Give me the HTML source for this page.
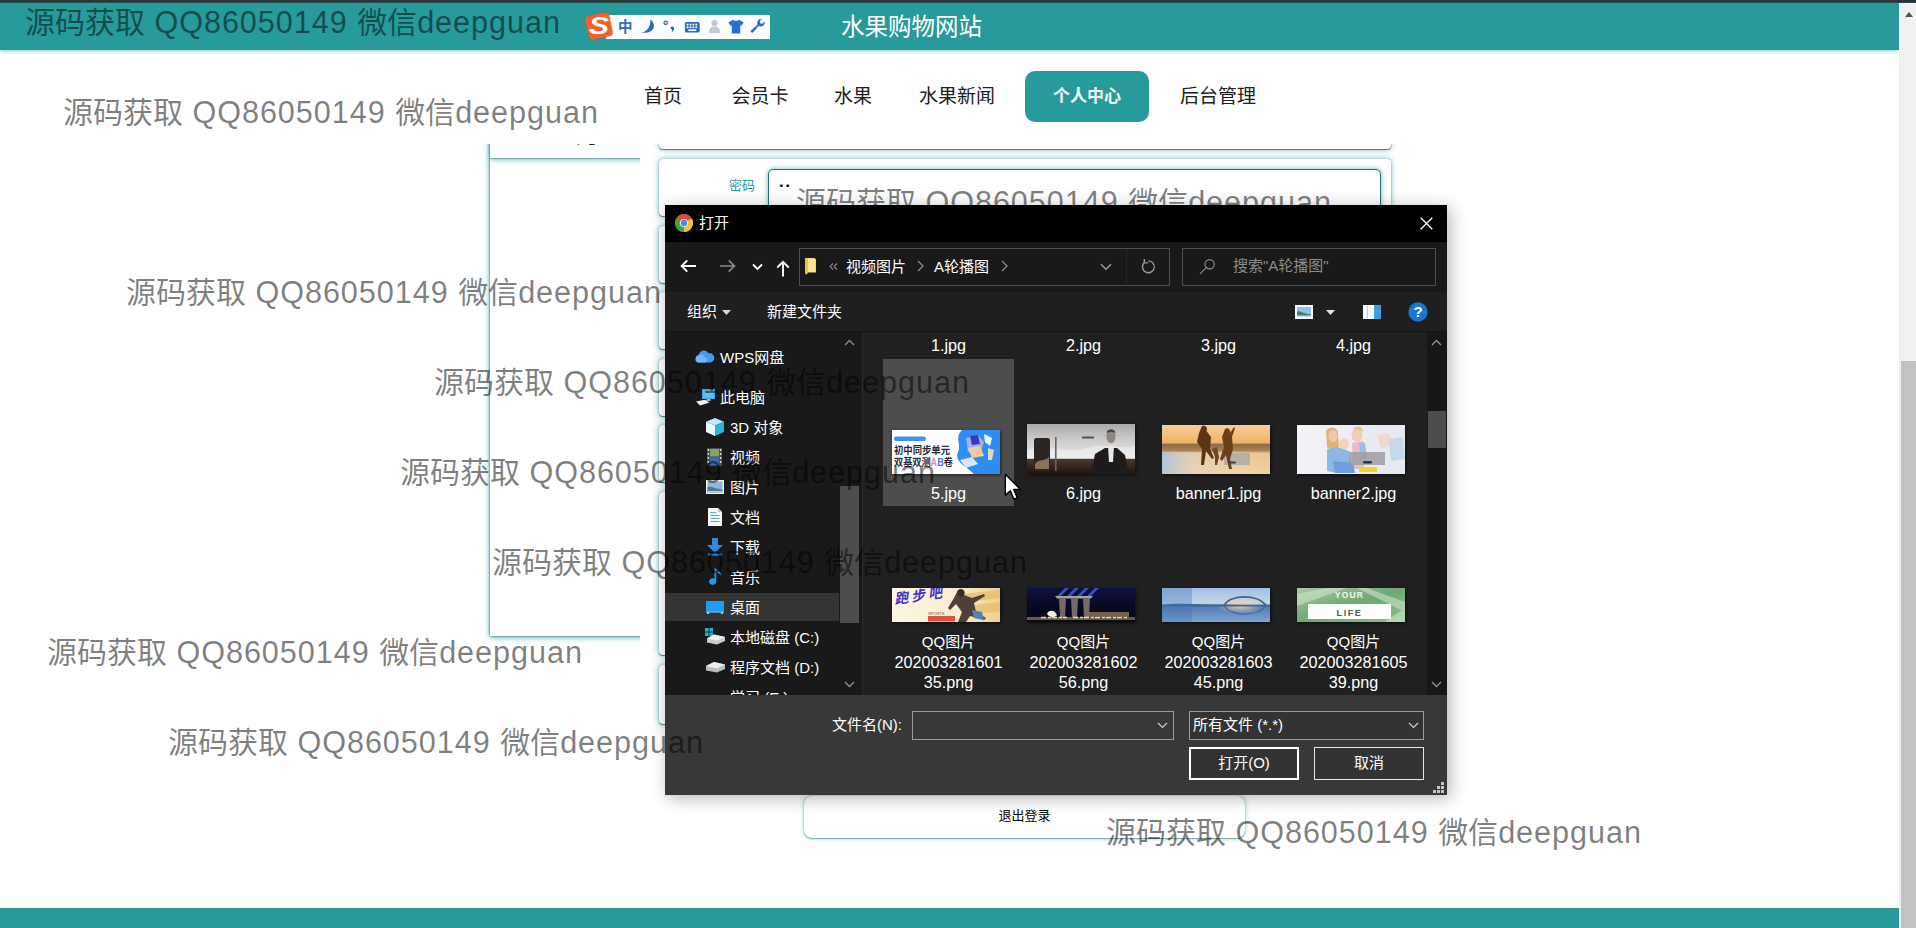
<!DOCTYPE html>
<html lang="zh-CN">
<head>
<meta charset="utf-8">
<title>水果购物网站</title>
<style>
*{box-sizing:border-box;margin:0;padding:0}
html,body{width:1916px;height:928px;overflow:hidden;background:#fff}
body{position:relative;font-family:"Liberation Sans","Noto Sans CJK SC",sans-serif;color:#000}
.abs{position:absolute}
/* page chrome */
#topstripe{left:0;top:0;width:1916px;height:3px;background:linear-gradient(#2c3234 0,#2c3234 66%,#1f5a5c 100%)}
#header{left:0;top:3px;width:1899px;height:47px;background:#279a9b;box-shadow:0 1px 4px rgba(39,154,155,.55)}
#sitetitle{left:841px;top:11px;width:150px;height:32px;line-height:32px;font-size:23.5px;color:#fff;white-space:nowrap}
#footer{left:0;top:908px;width:1899px;height:20px;background:#279a9b}
#sbar{left:1899px;top:3px;width:17px;height:925px;background:#f1f1f1}
#sbar .thumb{position:absolute;left:2px;top:358px;width:15px;height:567px;background:#c1c1c1}
#sbar .up{position:absolute;left:6px;top:9px;width:0;height:0;border-left:4.5px solid transparent;border-right:4.5px solid transparent;border-bottom:5px solid #505050}
/* nav */
.nav{z-index:2;top:71px;height:51px;line-height:51px;font-size:19px;color:#202020;white-space:nowrap;text-align:center}
.nav.on{left:1025px;width:124px;line-height:52px;background:#279a9b;border-radius:10px;color:#fff;font-size:17px;font-weight:bold}
/* watermark */
.wm b{font-weight:normal;font-size:30.6px;letter-spacing:.95px}
.wm{font-size:30px;line-height:40px;height:40px;white-space:nowrap;color:rgba(0,0,0,.5);z-index:50;pointer-events:none}
/* left panel */
#lpclip{left:470px;top:144px;width:170px;height:510px;overflow:hidden}
#lpanel{left:20px;top:-20px;width:170px;height:512px;background:#fff;box-shadow:0 0 1px 0 #2f6f72,0 0 2px 0 rgba(40,120,125,.8),0 1px 6px 0 rgba(39,154,155,.85)}
#ltab{left:20px;top:-20px;width:170px;height:34px;background:#fff;box-shadow:0 1px 1px 0 rgba(60,110,115,.4),0 2px 5px 0 rgba(39,154,155,.55)}
/* form boxes */
.fbox{left:659px;width:732px;border-radius:4px;background:#fff;box-shadow:0 1px 1px 0 rgba(40,100,105,.75),0 0 1px 0 rgba(40,110,115,.6),0 0 6px 0 rgba(39,154,155,.65)}
.finput{left:768px;top:169px;width:613px;height:45px;border:1.5px solid #2b6d72;border-radius:5px;background:#fff;box-shadow:0 0 5px 0 rgba(39,154,155,.7)}
.flabel{left:729px;top:177px;font-size:13px;line-height:18px;color:#279a9b;white-space:nowrap}
#logout{left:804px;top:796px;width:441px;height:42px;border-radius:8px;background:#fff;box-shadow:0 1px 1px 0 rgba(40,110,115,.5),0 0 1px 0 rgba(40,110,115,.5),0 0 5px 0 rgba(39,154,155,.5);text-align:center;font-size:13px;line-height:40px;color:#000}
/* dialog */
#dlg{left:665px;top:205px;width:782px;height:590px;background:#202020;box-shadow:3px 3px 16px 0 rgba(0,0,0,.30);color:#fff;font-size:14.5px;overflow:hidden;z-index:10}
#dlg .abs{white-space:nowrap}

#dlg .t{position:absolute;white-space:nowrap;line-height:20px;height:20px;font-size:15px;color:#fff}
#dlg .g{color:#8c8c8c}
#titlebar{left:0;top:0;width:782px;height:37px;background:#000}
#navrow{left:0;top:37px;width:782px;height:50px;background:#191919}
#toolrow{left:0;top:87px;width:782px;height:40px;background:#1f1f1f;border-bottom:1px solid #161616}
#tree{left:0;top:127px;width:196px;height:363px;background:#191919;overflow:hidden}
#split{left:196px;top:127px;width:2px;height:363px;background:#191919;border-right:1px solid #2b2b2b}
#files{left:198px;top:127px;width:564px;height:363px;background:#202020;overflow:hidden}
#fscroll{left:762px;top:127px;width:20px;height:363px;background:#171717}
#bottom{left:0;top:490px;width:782px;height:100px;background:#383838}
.box{position:absolute;border:1px solid #505050;background:#191919}
.sel{position:absolute;left:0;top:388px;width:174px;height:28px;background:#343434}
.thumbbar{position:absolute;background:#4d4d4d}
.flbl u{text-decoration:none;font-size:15px}
.flbl{position:absolute;width:135px;text-align:center;font-size:16.2px;line-height:20px;color:#fff;white-space:nowrap}
.th{position:absolute;display:block;box-shadow:1px 1px 3px rgba(0,0,0,.6)}
.ic{position:absolute;display:block;overflow:visible}
</style>
</head>
<body>
<div id="topstripe" class="abs"></div>
<div id="header" class="abs"></div>
<div id="sitetitle" class="abs">水果购物网站</div>
<div id="footer" class="abs"></div>
<div id="sbar" class="abs"><div class="up"></div><div class="thumb"></div></div>


<!-- SOGOU IME BAR -->
<div class="abs" style="left:606px;top:15px;width:164px;height:24px;background:#fdfeff;z-index:3"></div>
<div class="abs" style="left:587px;top:14px;width:24px;height:24px;background:#f0602a;border-radius:4px;transform:rotate(-12deg);z-index:4;box-shadow:0 0 2px rgba(200,70,20,.6)"></div>
<div class="abs" style="left:587px;top:11px;width:24px;height:30px;line-height:30px;text-align:center;font-size:26px;font-weight:bold;font-style:italic;color:#fff;z-index:5;transform:scale(1.15,.92)">S</div>
<div class="abs" style="left:618px;top:16px;width:16px;height:22px;line-height:22px;font-size:14.5px;font-weight:bold;color:#2f6dbd;z-index:5">中</div>
<svg class="abs" style="left:641px;top:19px;z-index:5" width="15" height="16" viewBox="0 0 15 16"><path d="M9.4 .4 C16 5 13.5 15.2 .8 13.6 C6.6 12.2 9.6 7.4 9.4 .4 Z" fill="#2f6dbd"/></svg>
<svg class="abs" style="left:663px;top:20px;z-index:5" width="14" height="14" viewBox="0 0 14 14"><circle cx="2.7" cy="2.8" r="1.7" stroke="#2f6dbd" stroke-width="1.3" fill="none"/><path d="M9 6.6 C12 6.6 12 10.5 8.4 12.6 C9.6 10.8 9.6 9.6 8 9 C7.2 8 7.8 6.6 9 6.6 Z" fill="#2f6dbd"/></svg>
<svg class="abs" style="left:684px;top:20.5px;z-index:5" width="16.5" height="12.5" viewBox="0 0 16 12"><rect x=".8" y=".8" width="14.4" height="10.4" rx="1.6" fill="#2f6dbd"/><g fill="#fdfeff"><rect x="2.6" y="2.6" width="1.7" height="1.7"/><rect x="5.4" y="2.6" width="1.7" height="1.7"/><rect x="8.2" y="2.6" width="1.7" height="1.7"/><rect x="11" y="2.6" width="1.7" height="1.7"/><rect x="2.6" y="5.2" width="1.7" height="1.7"/><rect x="5.4" y="5.2" width="1.7" height="1.7"/><rect x="8.2" y="5.2" width="1.7" height="1.7"/><rect x="11" y="5.2" width="1.7" height="1.7"/><rect x="4.2" y="8" width="7.6" height="1.6"/></g></svg>
<svg class="abs" style="left:708px;top:19px;z-index:5" width="13" height="15" viewBox="0 0 13 15"><circle cx="6.5" cy="4" r="3.1" fill="#c3c8d6"/><path d="M1 14 C1 9 3 7.6 6.5 7.6 C10 7.6 12 9 12 14 Z" fill="#c3c8d6"/></svg>
<svg class="abs" style="left:728px;top:19px;z-index:5" width="16" height="15" viewBox="0 0 16 15"><path d="M5 .8 C6 2.2 10 2.2 11 .8 L15.6 3.6 L13.6 6.8 L12.2 6.2 V14.4 H3.8 V6.2 L2.4 6.8 L.4 3.6 Z" fill="#2a6fd0"/></svg>
<svg class="abs" style="left:750px;top:18px;z-index:5" width="16" height="16" viewBox="0 0 16 16"><path d="M14.8 3.6 A4.2 4.2 0 0 1 8.6 7.9 L3 14.6 A1.6 1.6 0 0 1 .9 12.5 L7.6 6.8 A4.2 4.2 0 0 1 11.9 .8 L9.8 3.1 L10.3 5.2 L12.5 5.8 Z" fill="#2f6dbd"/></svg>

<!-- NAV -->
<div class="abs nav" style="left:633px;width:60px">首页</div>
<div class="abs nav" style="left:720px;width:80px">会员卡</div>
<div class="abs nav" style="left:823px;width:60px">水果</div>
<div class="abs nav" style="left:907px;width:100px">水果新闻</div>
<div class="abs nav on">个人中心</div>
<div class="abs nav" style="left:1168px;width:100px">后台管理</div>

<!-- LEFT PANEL -->
<div id="lpclip" class="abs"><div id="lpanel" class="abs"></div><div id="ltab" class="abs"></div><div class="abs" style="left:76px;top:-12px;width:56px;font-size:13px;line-height:13px;white-space:nowrap;color:#222;z-index:2">个人中心</div></div>

<!-- FORM BOXES -->
<div class="abs fbox" style="top:100px;height:49px"></div>
<div class="abs fbox" style="top:159px;height:57px"></div>
<div class="abs fbox" style="top:225.5px;height:57.0px"></div>
<div class="abs fbox" style="top:292px;height:57px"></div>
<div class="abs fbox" style="top:358.7px;height:57.0px"></div>
<div class="abs fbox" style="top:425.4px;height:57.0px"></div>
<div class="abs fbox" style="top:492px;height:163px"></div>
<div class="abs fbox" style="top:665px;height:59px"></div>
<div class="abs finput"></div>
<div class="abs flabel">密码</div>
<div class="abs" style="left:779px;top:177px;font-size:17px;line-height:18px;letter-spacing:0.5px;font-weight:bold">··</div>
<div id="logout" class="abs">退出登录</div>
<!-- white mask for fixed nav region over scrolled content -->
<div class="abs" style="left:0;top:55px;width:1899px;height:89px;background:#fff;z-index:1"></div>

<!-- DIALOG -->
<div id="dlg" class="abs">
<div id="titlebar" class="abs"></div>
<div class="t" style="left:34px;top:8px">打开</div>
<div id="navrow" class="abs"></div>
<div class="box" style="left:134px;top:43px;width:371px;height:38px"></div>
<div class="box" style="left:461px;top:44px;width:1px;height:36px;border:0;background:#262626"></div>
<div class="box" style="left:517px;top:43px;width:254px;height:38px"></div>
<svg class="ic" style="left:164px;top:58px" width="9" height="7" viewBox="0 0 9 7"><path d="M4 .5 L1 3.5 L4 6.5 M8 .5 L5 3.5 L8 6.5" stroke="#8c8c8c" stroke-width="1.1" fill="none"/></svg>
<div class="t" style="left:181px;top:52px">视频图片</div>
<svg class="ic" style="left:252px;top:55px" width="7" height="12" viewBox="0 0 7 12"><path d="M1 1 L6 6 L1 11" stroke="#8c8c8c" stroke-width="1.3" fill="none"/></svg>
<div class="t" style="left:269px;top:52px">A轮播图</div>
<svg class="ic" style="left:336px;top:55px" width="7" height="12" viewBox="0 0 7 12"><path d="M1 1 L6 6 L1 11" stroke="#8c8c8c" stroke-width="1.3" fill="none"/></svg>
<div class="t g" style="left:568px;top:51px">搜索"A轮播图"</div>
<div id="toolrow" class="abs"></div>

<!-- chrome icon -->
<svg class="ic" style="left:10px;top:9px" width="18" height="18" viewBox="0 0 18 18"><circle cx="9" cy="9" r="9" fill="#4caf50"/><path d="M9 9 L1.2 4.5 A9 9 0 0 1 16.8 4.5 Z" fill="#e8453c"/><path d="M9 9 L16.8 4.5 A9 9 0 0 1 9 18 Z" fill="#fbc02d"/><path d="M9 9 L9 18 A9 9 0 0 1 1.2 4.5 Z" fill="#43a047"/><circle cx="9" cy="9" r="4.1" fill="#f1f1f1"/><circle cx="9" cy="9" r="3.2" fill="#4a8af4"/></svg>
<!-- close -->
<svg class="ic" style="left:755px;top:12px" width="13" height="13" viewBox="0 0 13 13"><path d="M.7 .7 L12.3 12.3 M12.3 .7 L.7 12.3" stroke="#fff" stroke-width="1.3" fill="none"/></svg>
<!-- back -->
<svg class="ic" style="left:15px;top:54px" width="17" height="14" viewBox="0 0 17 14"><path d="M16 7 H2 M7.3 1.3 L1.6 7 L7.3 12.7" stroke="#fff" stroke-width="1.9" fill="none"/></svg>
<!-- forward -->
<svg class="ic" style="left:54px;top:54px" width="17" height="14" viewBox="0 0 17 14"><path d="M1 7 H15 M9.7 1.3 L15.4 7 L9.7 12.7" stroke="#8a8a8a" stroke-width="1.7" fill="none"/></svg>
<!-- chevron -->
<svg class="ic" style="left:87px;top:58px" width="11" height="8" viewBox="0 0 11 8"><path d="M1 1.5 L5.5 6 L10 1.5" stroke="#fff" stroke-width="1.8" fill="none"/></svg>
<!-- up -->
<svg class="ic" style="left:111px;top:55px" width="14" height="17" viewBox="0 0 14 17"><path d="M7 16.5 V2 M1.3 7.5 L7 1.8 L12.7 7.5" stroke="#fff" stroke-width="1.9" fill="none"/></svg>
<!-- folder -->
<svg class="ic" style="left:139px;top:52px" width="14" height="19" viewBox="0 0 14 19"><path d="M1 1 H10.5 L12 2.5 V15.5 H3.5 L2 17.5 L1 16 Z" fill="#f7d774"/><path d="M1 1 H4 V16 L2 17.5 L1 16 Z" fill="#e9bf4e"/><path d="M4 2 H11 V15 H4 Z" fill="#fbe491"/></svg>
<!-- address dropdown chevron -->
<svg class="ic" style="left:435px;top:58px" width="12" height="8" viewBox="0 0 12 8"><path d="M1 1.2 L6 6.2 L11 1.2" stroke="#9a9a9a" stroke-width="1.6" fill="none"/></svg>
<!-- refresh -->
<svg class="ic" style="left:475px;top:53px" width="16" height="16" viewBox="0 0 16 16"><path d="M4.3 4.6 A5.9 5.9 0 1 0 8.4 2.9" stroke="#9a9a9a" stroke-width="1.4" fill="none"/><path d="M4.3 .9 V4.9 H8.2" stroke="#9a9a9a" stroke-width="1.4" fill="none"/></svg>
<!-- search -->
<svg class="ic" style="left:534px;top:53px" width="17" height="17" viewBox="0 0 17 17"><circle cx="10.6" cy="6.2" r="4.6" stroke="#8a8a8a" stroke-width="1.2" fill="none"/><path d="M7.3 9.6 L1 15.9" stroke="#8a8a8a" stroke-width="1.2"/></svg>
<!-- organise arrow -->
<svg class="ic" style="left:57px;top:105px" width="9" height="5" viewBox="0 0 9 5"><path d="M0 0 H9 L4.5 5 Z" fill="#d8d8d8"/></svg>
<!-- view icon -->
<svg class="ic" style="left:630px;top:100px" width="18" height="14" viewBox="0 0 18 14"><rect width="18" height="14" fill="#f4f6fa"/><rect x="2" y="2" width="14" height="10" fill="#8ec3ea"/><path d="M2 12 V6.5 C5 5 8 8.5 16 9.5 V12 Z" fill="#3f7f74"/><path d="M2 12 V10.5 H16 V12 Z" fill="#c9dfe2"/></svg>
<svg class="ic" style="left:661px;top:105px" width="9" height="5" viewBox="0 0 9 5"><path d="M0 0 H9 L4.5 5 Z" fill="#e2e2e2"/></svg>
<!-- pane icon -->
<svg class="ic" style="left:698px;top:100px" width="18" height="14" viewBox="0 0 18 14"><rect width="18" height="14" fill="#fbfbfb"/><rect x="11" y="0" width="7" height="14" fill="#3f9de6"/><rect x="4" y="1" width="1" height="12" fill="#c8c8c8"/></svg>
<!-- help -->
<svg class="ic" style="left:743px;top:97px" width="20" height="20" viewBox="0 0 20 20"><circle cx="10" cy="10" r="9.7" fill="#1976d2"/><text x="10" y="15.2" text-anchor="middle" font-family="Liberation Sans, sans-serif" font-size="15" font-weight="bold" fill="#fff">?</text></svg>

<div class="t" style="left:22px;top:97px">组织</div>
<div class="t" style="left:102px;top:97px">新建文件夹</div>

<div id="tree" class="abs">
<div class="sel" style="top:261px"></div>
<div class="t" style="left:55px;top:16px">WPS网盘</div>
<div class="t" style="left:55px;top:56px">此电脑</div>
<div class="t" style="left:65px;top:86px">3D 对象</div>
<div class="t" style="left:65px;top:116px">视频</div>
<div class="t" style="left:65px;top:146px">图片</div>
<div class="t" style="left:65px;top:176px">文档</div>
<div class="t" style="left:65px;top:206px">下载</div>
<div class="t" style="left:65px;top:236px">音乐</div>
<div class="t" style="left:65px;top:266px">桌面</div>
<div class="t" style="left:65px;top:296px">本地磁盘 (C:)</div>
<div class="t" style="left:65px;top:326px">程序文档 (D:)</div>
<div class="t" style="left:65px;top:356px">学习 (E:)</div>
<div class="thumbbar" style="left:175px;top:154px;width:19px;height:137px"></div>
<!-- wps cloud -->
<svg class="ic" style="left:30px;top:18px" width="20" height="13" viewBox="0 0 20 13"><path d="M4.5 12.5 A4 4 0 0 1 4 4.6 A5.2 5.2 0 0 1 13.6 3.2 A4.7 4.7 0 0 1 15.5 12.5 Z" fill="#3d9bf5"/><path d="M2.5 12.5 A3.2 3.2 0 0 1 3.2 6.3 A4 4 0 0 1 10 7.4 A2.7 2.7 0 0 1 10.5 12.5 Z" fill="#6fb8ff"/></svg>
<!-- this pc -->
<svg class="ic" style="left:31px;top:57px" width="20" height="17" viewBox="0 0 20 17"><path d="M6 0 H19 V10 H6 Z" fill="#39a0ea"/><path d="M7 1 H18 V9 H7 Z" fill="#5cc0f7"/><path d="M10.5 10 H14.5 V12 H10.5 Z" fill="#9fb4c4"/><path d="M0 12.5 L9 10.8 L13.5 13.5 L4 16.5 Z" fill="#eef2f5"/></svg>
<!-- 3d -->
<svg class="ic" style="left:41px;top:86px" width="18" height="18" viewBox="0 0 18 18"><path d="M9 0 L18 3.8 L9 7.6 L0 3.8 Z" fill="#b5f0fb"/><path d="M0 3.8 L9 7.6 V18 L0 14 Z" fill="#e9fbff"/><path d="M18 3.8 L9 7.6 V18 L18 14 Z" fill="#25b7d8"/></svg>
<!-- video -->
<svg class="ic" style="left:42px;top:116px" width="15" height="18" viewBox="0 0 15 18"><rect width="15" height="18" fill="#4b4b4b"/><rect x="3" y="1" width="9" height="7.5" fill="#7fa664"/><rect x="3" y="9.5" width="9" height="7.5" fill="#3d6eb5"/><g fill="#d5d5d5"><rect x=".6" y="1" width="1.5" height="2"/><rect x=".6" y="5" width="1.5" height="2"/><rect x=".6" y="9" width="1.5" height="2"/><rect x=".6" y="13" width="1.5" height="2"/><rect x="12.9" y="1" width="1.5" height="2"/><rect x="12.9" y="5" width="1.5" height="2"/><rect x="12.9" y="9" width="1.5" height="2"/><rect x="12.9" y="13" width="1.5" height="2"/></g></svg>
<!-- pictures -->
<svg class="ic" style="left:41px;top:148px" width="18" height="14" viewBox="0 0 18 14"><rect width="18" height="14" fill="#eef3f8"/><rect x="1.5" y="1.5" width="15" height="11" fill="#8fb9dc"/><path d="M1.5 12.5 V7 C6 6 9 9 16.5 9.5 V12.5 Z" fill="#4b7d86"/><path d="M1.5 12.5 V11 H16.5 V12.5 Z" fill="#bcd4da"/></svg>
<!-- documents -->
<svg class="ic" style="left:43px;top:176px" width="14" height="18" viewBox="0 0 14 18"><path d="M0 0 H10 L14 4 V18 H0 Z" fill="#f4f6f8"/><path d="M10 0 V4 H14 Z" fill="#c3c9cf"/><g stroke="#5aa7d8" stroke-width="1"><path d="M2.5 4.5 H8.5 M2.5 7.5 H11.5 M2.5 10.5 H11.5 M2.5 13.5 H11.5"/></g></svg>
<!-- downloads -->
<svg class="ic" style="left:42px;top:206px" width="16" height="18" viewBox="0 0 16 18"><path d="M5 0 H11 V7 H16 L8 15 L0 7 H5 Z" fill="#2b8be0"/><path d="M1 15.5 H15 V17.5 H1 Z" fill="#2b8be0"/></svg>
<!-- music -->
<svg class="ic" style="left:44px;top:235px" width="13" height="19" viewBox="0 0 13 19"><path d="M5.5 0 C7 3 12 4 12.5 9 C11 6.5 9 6 7.2 5.6 V14.5 A3.6 3.3 0 1 1 5.5 11.8 Z" fill="#1e9df0"/></svg>
<!-- desktop -->
<svg class="ic" style="left:41px;top:269px" width="18" height="13" viewBox="0 0 18 13"><rect x="0" y="0" width="18" height="11.4" fill="#1e9df7"/><rect x="1" y="11.4" width="2.2" height="1.4" fill="#cfe6f7"/><rect x="14.8" y="11.4" width="2.2" height="1.4" fill="#cfe6f7"/><rect x="0" y="10.6" width="18" height=".9" fill="#7cc4f5"/></svg>
<!-- disk C -->
<svg class="ic" style="left:40px;top:296px" width="21" height="17" viewBox="0 0 21 17"><g fill="#19b1d9"><rect x="0" y="0" width="3.6" height="3.6"/><rect x="4.4" y="0" width="3.6" height="3.6"/><rect x="0" y="4.4" width="3.6" height="3.6"/><rect x="4.4" y="4.4" width="3.6" height="3.6"/></g><path d="M2 10.5 L9 6.5 L20 9 V13 L12 16.5 L2 14.5 Z" fill="#c9cdd1"/><path d="M2 10.5 L9 6.5 L20 9 L12 12.5 Z" fill="#f0f2f4"/></svg>
<!-- disk D -->
<svg class="ic" style="left:40px;top:329px" width="21" height="12" viewBox="0 0 21 12"><path d="M1 5 L9 1 L20 3.5 V8 L12 11.5 L1 9.5 Z" fill="#b9bdc1"/><path d="M1 5 L9 1 L20 3.5 L12 7.5 Z" fill="#eceef0"/></svg>
<!-- tree scrollbar arrows -->
<svg class="ic" style="left:179px;top:7px" width="11" height="7" viewBox="0 0 11 7"><path d="M1 6 L5.5 1.5 L10 6" stroke="#8f8f8f" stroke-width="1.4" fill="none"/></svg>
<svg class="ic" style="left:179px;top:349px" width="11" height="7" viewBox="0 0 11 7"><path d="M1 1 L5.5 5.5 L10 1" stroke="#8f8f8f" stroke-width="1.4" fill="none"/></svg>

</div>
<div id="split" class="abs"></div>

<div id="files" class="abs">
<div class="abs" style="left:20px;top:27px;width:131px;height:147px;background:#4d4d4d"></div>

<!-- 5.jpg -->
<svg class="th" style="left:29px;top:98px" width="108" height="44" viewBox="0 0 108 44"><rect width="108" height="44" fill="#fdfdfe"/><path d="M70 0 C62 8 70 14 66 22 C62 32 74 36 82 44 H108 V0 Z" fill="#2e8ef4"/><rect x="2" y="6.5" width="32" height="4.5" rx="2.2" fill="#3f93ee"/><text x="2" y="24" font-family="Liberation Sans, Noto Sans CJK SC, sans-serif" font-size="10.2" font-weight="bold" fill="#262b3a" textLength="56" lengthAdjust="spacingAndGlyphs">初中同步单元</text><text x="2" y="35.8" font-family="Liberation Sans, Noto Sans CJK SC, sans-serif" font-size="10.2" font-weight="bold" fill="#262b3a" textLength="59" lengthAdjust="spacingAndGlyphs">双基双测<tspan fill="#f07fa8">A</tspan><tspan fill="#3f7be8">B</tspan>卷</text><path d="M74 8 L86 5 L92 12 L88 24 L76 22 Z" fill="#9fb2ee"/><path d="M78 6 L86 5 L88 14 L80 15 Z" fill="#3d38b8"/><path d="M76 18 L88 16 L92 26 L80 28 Z" fill="#f3c9a0"/><path d="M92 4 L100 8 L98 16 L93 12 Z" fill="#f4f8ff"/><path d="M68 30 L80 27 L86 34 L74 38 Z" fill="#dbe6fb"/><path d="M96 18 L102 20 L100 30 L96 30 Z" fill="#f1d3b8"/></svg>
<!-- 6.jpg -->
<svg class="th" style="left:164px;top:92px" width="108" height="50" viewBox="0 0 108 50"><defs><linearGradient id="g6" x1="0" y1="0" x2="0" y2="1"><stop offset="0" stop-color="#a9a9a9"/><stop offset=".35" stop-color="#cfcfcf"/><stop offset=".68" stop-color="#e6e6e6"/><stop offset=".7" stop-color="#4a3a2e"/><stop offset="1" stop-color="#1d1410"/></linearGradient></defs><rect width="108" height="50" fill="url(#g6)"/><path d="M0 26 C20 20 40 30 60 24 C80 18 95 26 108 22 V35 H0 Z" fill="#f2f2f2" opacity=".55"/><rect x="7" y="14" width="16" height="33" rx="2.5" fill="#2b2622"/><path d="M8 40 C12 34 18 38 22 33 V45 H8 Z" fill="#8a7359"/><rect x="28" y="13" width="1.6" height="34" fill="#6d655c"/><path d="M64 50 L68 30 L78 24 L90 24 L98 31 L102 50 Z" fill="#1e1c1c"/><ellipse cx="84" cy="12.5" rx="4.6" ry="6.6" fill="#8d8782"/><path d="M79.5 9 C80 4 88 4 88.5 9 C86 7.5 82 7.5 79.5 9 Z" fill="#4a4644"/><path d="M81 22 L87 22 L86 38 L82 38 Z" fill="#e9e9e9"/><rect x="55" y="12.5" width="12" height="2" fill="#555"/></svg>
<!-- banner1 -->
<svg class="th" style="left:299px;top:93px" width="108" height="49" viewBox="0 0 108 49"><defs><linearGradient id="gb1" x1="0" y1="0" x2="0" y2="1"><stop offset="0" stop-color="#f7cf97"/><stop offset=".36" stop-color="#f0b366"/><stop offset=".4" stop-color="#8c6a4a"/><stop offset=".52" stop-color="#a98258"/><stop offset=".58" stop-color="#ecc48e"/><stop offset="1" stop-color="#f1d0a0"/></linearGradient><linearGradient id="gb1b" x1="0" y1="0" x2="1" y2="0"><stop offset="0" stop-color="#a9c3de" stop-opacity=".9"/><stop offset=".3" stop-color="#dcd6cf" stop-opacity=".5"/><stop offset="1" stop-color="#f5e2c0" stop-opacity="0"/></linearGradient></defs><rect width="108" height="49" fill="url(#gb1)"/><rect y="27" width="108" height="22" fill="url(#gb1b)"/><rect x="62" y="28" width="26" height="12" fill="#a9a9a6" opacity=".8"/><path d="M40 1 C44 0 46 3 44.5 6 L49 12 L48 24 L52 33 L50 34 L44 26 L42 40 L39 40 L40 24 L35 17 L37 8 Z" fill="#5b3516"/><path d="M63 4 C66 2 69 5 68 8 L72 2 L73 3 L70 12 L71 24 L68 34 L70 44 L67 44 L64 30 L60 36 L58 34 L62 22 L60 12 Z" fill="#6b3f1b"/><path d="M50 24 L55 22 L57 32 L55 40 L53 40 L53 32 Z" fill="#6e4826"/><rect x="66" y="36.5" width="8" height="2" rx="1" fill="#5a2f3f"/></svg>
<!-- banner2 -->
<svg class="th" style="left:434px;top:93px" width="108" height="49" viewBox="0 0 108 49"><defs><linearGradient id="gb2" x1="0" y1="0" x2="1" y2="0"><stop offset="0" stop-color="#f3f3f8"/><stop offset=".5" stop-color="#ececf2"/><stop offset="1" stop-color="#e6e9f0"/></linearGradient></defs><rect width="108" height="49" fill="url(#gb2)"/><path d="M80 10 L92 8 L96 20 L84 24 Z" fill="#ecdcc9"/><path d="M92 14 L106 12 L108 34 L94 36 Z" fill="#bcd3e8" opacity=".8"/><path d="M29 6 C32 1 40 1 41 8 L42 22 L36 26 L30 22 Z" fill="#dcb774"/><ellipse cx="36" cy="11" rx="4.5" ry="6" fill="#f0c7ae"/><ellipse cx="47" cy="19" rx="5" ry="6" fill="#f3d2c0"/><ellipse cx="60" cy="10" rx="5.5" ry="7" fill="#f1cdb6"/><path d="M56 4 C59 0 66 1 66 7 C62 4 59 4 56 4 Z" fill="#e5c68c"/><path d="M30 24 L40 22 L52 26 L54 40 L40 48 L30 46 Z" fill="#8fb6e4"/><path d="M55 18 L66 16 L70 28 L66 44 L56 44 Z" fill="#e9b9cc"/><path d="M62 18 L68 18 L70 34 L64 34 Z" fill="#9bbde6"/><path d="M36 36 L56 38 L58 48 L38 48 Z" fill="#6b9fde"/><rect x="52" y="27" width="36" height="13" fill="#9d9da3" opacity=".85"/><rect x="66" y="36" width="9" height="2.4" rx="1.2" fill="#2a3550"/><rect x="62" y="42" width="18" height="5" fill="#f2d61f"/></svg>
<!-- QQ1 -->
<svg class="th" style="left:29px;top:256px" width="108" height="34" viewBox="0 0 108 34"><defs><linearGradient id="gq1" x1="0" y1="0" x2="1" y2="0"><stop offset="0" stop-color="#fdf6e3"/><stop offset=".6" stop-color="#f9edcf"/><stop offset="1" stop-color="#efd08f"/></linearGradient></defs><rect width="108" height="34" fill="url(#gq1)"/><path d="M70 6 L108 2 V10 L76 14 Z M74 18 L108 14 V24 L80 26 Z" fill="#e6bd6a" opacity=".75"/><path d="M66 2 C70 0 74 3 72 7 L80 10 L92 6 L93 8 L82 15 L84 24 L94 30 L92 32 L78 28 L74 34 H66 L70 24 L64 16 L58 22 L56 20 L62 10 Z" fill="#4c4038"/><path d="M80 22 L90 24 L92 32 L82 30 Z" fill="#4c86b8"/><ellipse cx="69" cy="5" rx="3.4" ry="3.8" fill="#3a2c24"/><text x="3" y="16" font-family="Liberation Sans, Noto Sans CJK SC, sans-serif" font-size="14" font-weight="bold" font-style="italic" fill="#4432c4" transform="rotate(-8 3 16)" textLength="48">跑步吧</text><text x="36" y="26.5" font-family="Liberation Sans, Noto Sans CJK SC, sans-serif" font-size="4" fill="#555">SPORTS</text><rect x="36" y="28" width="27" height="5.5" fill="#d9563d"/></svg>
<!-- QQ2 -->
<svg class="th" style="left:164px;top:256px" width="108" height="34" viewBox="0 0 108 34"><defs><linearGradient id="gq2" x1="0" y1="0" x2="0" y2="1"><stop offset="0" stop-color="#0d1140"/><stop offset=".6" stop-color="#070822"/><stop offset="1" stop-color="#0a0a14"/></linearGradient></defs><rect width="108" height="34" fill="url(#gq2)"/><path d="M30 8 L38 0 H42 L34 8 Z M40 8 L48 0 H52 L44 8 Z M50 8 L58 0 H62 L54 8 Z M60 8 L68 0 H72 L64 8 Z" fill="#3c5fd6" opacity=".85"/><path d="M28 8 H66 L64 10.5 H30 Z" fill="#a8a1a0"/><path d="M32 10.5 H39 L38 30 H33 Z M44 10.5 H51 L50 30 H45 Z M56 10.5 H63 L62 30 H57 Z" fill="#746a68"/><path d="M20 26 C22 21 28 22 30 27 C28 30 23 30 20 26 Z" fill="#f4f0ea"/><rect x="0" y="29" width="108" height="3" fill="#6a5a40"/><path d="M14 29.5 H40 M46 29.5 H100" stroke="#e9dcb5" stroke-width="1.6" stroke-dasharray="5 2 3 1"/><rect x="62" y="24" width="40" height="5" fill="#8f7a55" opacity=".8"/></svg>
<!-- QQ3 -->
<svg class="th" style="left:299px;top:256px" width="108" height="34" viewBox="0 0 108 34"><defs><linearGradient id="gq3" x1="0" y1="0" x2="0" y2="1"><stop offset="0" stop-color="#9fc0e4"/><stop offset=".45" stop-color="#c5d6e8"/><stop offset=".52" stop-color="#4f79b0"/><stop offset="1" stop-color="#7fa5d4"/></linearGradient><radialGradient id="gq3s" cx=".72" cy=".52" r=".22"><stop offset="0" stop-color="#f6cfa2"/><stop offset="1" stop-color="#f6cfa2" stop-opacity="0"/></radialGradient></defs><rect width="108" height="34" fill="url(#gq3)"/><rect width="108" height="34" fill="url(#gq3s)"/><path d="M0 17 C20 14 40 17 60 16.5 L108 17 V18.5 H0 Z" fill="#3f6496"/><path d="M62 17.5 C68 6 96 6 104 17.5" stroke="#4a5f82" stroke-width="1.6" fill="none"/><path d="M62 17.5 C68 29 96 29 104 17.5" stroke="#3f5f90" stroke-width="1.3" fill="none" opacity=".8"/><rect x="0" y="0" width="30" height="34" fill="#3f74b8" opacity=".35"/></svg>
<!-- QQ4 -->
<svg class="th" style="left:434px;top:256px" width="108" height="34" viewBox="0 0 108 34"><defs><linearGradient id="gq4" x1="0" y1="0" x2="1" y2="1"><stop offset="0" stop-color="#a8c9a4"/><stop offset=".5" stop-color="#6fa873"/><stop offset="1" stop-color="#8fc08d"/></linearGradient></defs><rect width="108" height="34" fill="url(#gq4)"/><path d="M0 6 L30 0 H50 L0 18 Z M70 0 L108 14 V24 L60 0 Z M88 34 L108 20 V34 Z" fill="#d6e8d2" opacity=".55"/><rect x="11" y="16" width="83" height="15" fill="#fdfdfd"/><text x="52.5" y="10" font-family="Liberation Sans, Noto Sans CJK SC, sans-serif" font-size="8.5" font-weight="bold" text-anchor="middle" fill="#f2f6ef" letter-spacing="1.2">YOUR</text><text x="52.5" y="27.5" font-family="Liberation Sans, Noto Sans CJK SC, sans-serif" font-size="9" font-weight="bold" text-anchor="middle" fill="#4b5a55" letter-spacing="1.6">LIFE</text></svg>
<div class="flbl" style="left:18px;top:3px">1.jpg</div>
<div class="flbl" style="left:153px;top:3px">2.jpg</div>
<div class="flbl" style="left:288px;top:3px">3.jpg</div>
<div class="flbl" style="left:423px;top:3px">4.jpg</div>
<div class="flbl" style="left:18px;top:151px">5.jpg</div>
<div class="flbl" style="left:153px;top:151px">6.jpg</div>
<div class="flbl" style="left:288px;top:151px">banner1.jpg</div>
<div class="flbl" style="left:423px;top:151px">banner2.jpg</div>
<div class="flbl" style="left:18px;top:299px"><u>QQ图片</u><br>202003281601<br>35.png</div>
<div class="flbl" style="left:153px;top:299px"><u>QQ图片</u><br>202003281602<br>56.png</div>
<div class="flbl" style="left:288px;top:299px"><u>QQ图片</u><br>202003281603<br>45.png</div>
<div class="flbl" style="left:423px;top:299px"><u>QQ图片</u><br>202003281605<br>39.png</div>
</div>
<div id="fscroll" class="abs"><svg class="ic" style="left:4px;top:7px" width="11" height="7" viewBox="0 0 11 7"><path d="M1 6 L5.5 1.5 L10 6" stroke="#8f8f8f" stroke-width="1.4" fill="none"/></svg><svg class="ic" style="left:4px;top:349px" width="11" height="7" viewBox="0 0 11 7"><path d="M1 1 L5.5 5.5 L10 1" stroke="#8f8f8f" stroke-width="1.4" fill="none"/></svg><div class="thumbbar" style="left:1px;top:79px;width:18px;height:37px"></div></div>

<div id="bottom" class="abs"></div>
<div class="t" style="left:167px;top:510px">文件名(N):</div>
<div class="box" style="left:247px;top:506px;width:262px;height:29px;background:#383838;border-color:#9b9b9b"></div>
<div class="box" style="left:524px;top:506px;width:235px;height:29px;background:#333;border-color:#9b9b9b"></div>
<div class="t" style="left:528px;top:510px">所有文件 (*.*)</div>
<div class="box" style="left:524px;top:542px;width:110px;height:33px;background:#333;border:2px solid #fff"></div>
<div class="t" style="left:524px;top:548px;width:110px;text-align:center">打开(O)</div>
<div class="box" style="left:649px;top:542px;width:110px;height:33px;background:#333;border:1px solid #e6e6e6"></div>
<div class="t" style="left:649px;top:548px;width:110px;text-align:center">取消</div>
<svg class="ic" style="left:492px;top:517px" width="11" height="7" viewBox="0 0 11 7"><path d="M1 1 L5.5 5.5 L10 1" stroke="#d0d0d0" stroke-width="1.2" fill="none"/></svg>
<svg class="ic" style="left:743px;top:517px" width="11" height="7" viewBox="0 0 11 7"><path d="M1 1 L5.5 5.5 L10 1" stroke="#d0d0d0" stroke-width="1.2" fill="none"/></svg>
<svg class="ic" style="left:768px;top:577px" width="11" height="11" viewBox="0 0 11 11"><g fill="#c4c4c4"><rect x="8" y="0" width="3" height="3"/><rect x="4" y="4" width="3" height="3"/><rect x="8" y="4" width="3" height="3"/><rect x="0" y="8" width="3" height="3"/><rect x="4" y="8" width="3" height="3"/><rect x="8" y="8" width="3" height="3"/></g></svg>
<!-- mouse cursor -->
<svg class="ic" style="left:338.5px;top:268.3px;z-index:60" width="18.2" height="28.6" viewBox="0 0 14 22"><path d="M1 1 V17.2 L4.9 13.6 L7.6 20.2 L10.2 19.1 L7.5 12.7 H12.7 Z" fill="#fff" stroke="#000" stroke-width="1.1" stroke-linejoin="round"/></svg>

</div>

<!-- WATERMARKS -->
<div class="abs wm" style="left:25px;top:2px">源码获取<b> QQ86050149 </b>微信<b>deepguan</b></div>
<div class="abs wm" style="left:63px;top:92px">源码获取<b> QQ86050149 </b>微信<b>deepguan</b></div>
<div class="abs wm" style="left:796px;top:182px">源码获取<b> QQ86050149 </b>微信<b>deepguan</b></div>
<div class="abs wm" style="left:126px;top:272px">源码获取<b> QQ86050149 </b>微信<b>deepguan</b></div>
<div class="abs wm" style="left:434px;top:362px">源码获取<b> QQ86050149 </b>微信<b>deepguan</b></div>
<div class="abs wm" style="left:400px;top:452px">源码获取<b> QQ86050149 </b>微信<b>deepguan</b></div>
<div class="abs wm" style="left:492px;top:542px">源码获取<b> QQ86050149 </b>微信<b>deepguan</b></div>
<div class="abs wm" style="left:47px;top:632px">源码获取<b> QQ86050149 </b>微信<b>deepguan</b></div>
<div class="abs wm" style="left:168px;top:722px">源码获取<b> QQ86050149 </b>微信<b>deepguan</b></div>
<div class="abs wm" style="left:1106px;top:812px">源码获取<b> QQ86050149 </b>微信<b>deepguan</b></div>
</body>
</html>
